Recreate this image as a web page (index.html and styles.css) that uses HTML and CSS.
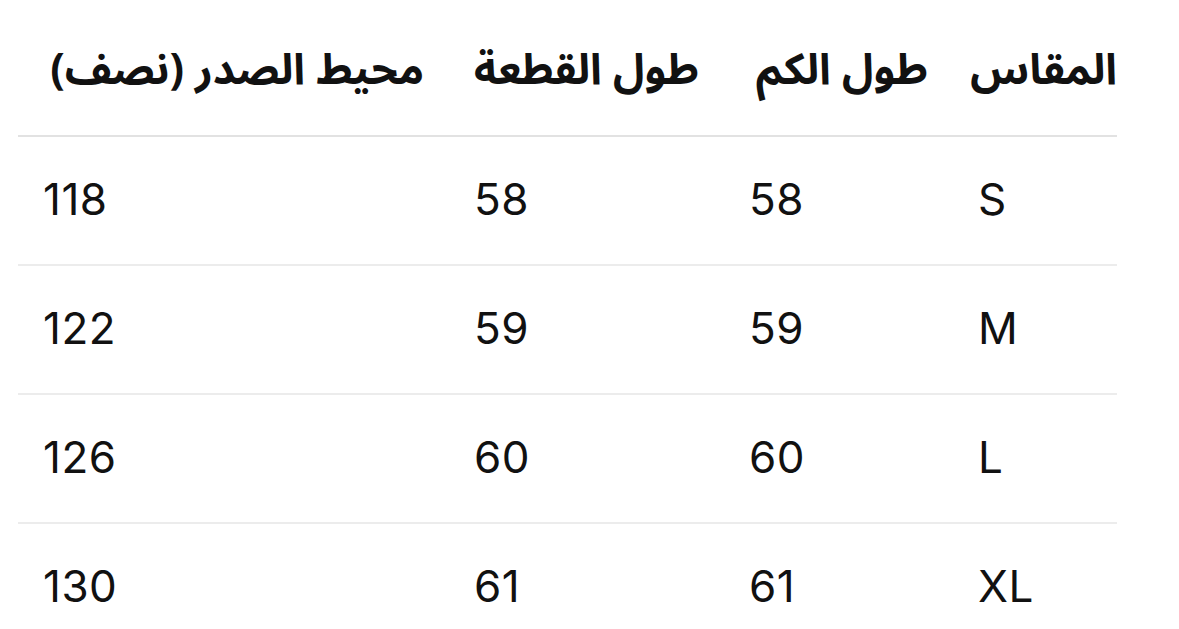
FILE: index.html
```html
<!DOCTYPE html>
<html lang="ar" dir="rtl">
<head>
<meta charset="utf-8">
<link rel="stylesheet" href="styles.css">
</head>
<body>
<div class="wrap">
<table class="sizes">
  <colgroup>
    <col class="c-size">
    <col class="c-sleeve">
    <col class="c-length">
    <col class="c-chest">
  </colgroup>
  <thead>
    <tr><th>المقاس</th><th>طول الكم</th><th>طول القطعة</th><th>محيط الصدر (نصف)</th></tr>
  </thead>
  <tbody>
    <tr><td>S</td><td>58</td><td>58</td><td>118</td></tr>
    <tr><td>M</td><td>59</td><td>59</td><td>122</td></tr>
    <tr><td>L</td><td>60</td><td>60</td><td>126</td></tr>
    <tr><td>XL</td><td>61</td><td>61</td><td>130</td></tr>
  </tbody>
</table>
</div>
</body>
</html>
```
FILE: styles.css
```css
html, body { margin: 0; padding: 0; background: #fff; }
body { color: #111; }
.wrap { padding: 7px 62px 0 18px; }
.sizes {
  border-collapse: collapse;
  table-layout: fixed;
  width: 1099px;
}
.c-size { width: 164px; }
.c-sleeve { width: 229px; }
.c-length { width: 275px; }
.c-chest { width: 431px; }
.sizes th, .sizes td {
  box-sizing: border-box;
  height: 129px;
  padding: 0 25px;
  vertical-align: middle;
  white-space: nowrap;
}
.sizes th:first-child, .sizes td:first-child { padding-right: 0; }
.sizes th {
  font-family: "Noto Sans Arabic", "DejaVu Sans", sans-serif;
  font-weight: bold;
  font-size: 43px;
  line-height: 1.2;
  text-align: right;
  border-bottom: 2px solid #e2e2e2;
}
.sizes td {
  font-family: Inter, "Liberation Sans", sans-serif;
  font-size: 44px;
  line-height: 1.2;
  font-weight: 400;
  letter-spacing: 0.5px;
  text-align: left;
  direction: ltr;
  border-bottom: 2px solid #ececec;
  padding-bottom: 3px;
}
.sizes tbody tr:last-child td { border-bottom: 0; }
```
